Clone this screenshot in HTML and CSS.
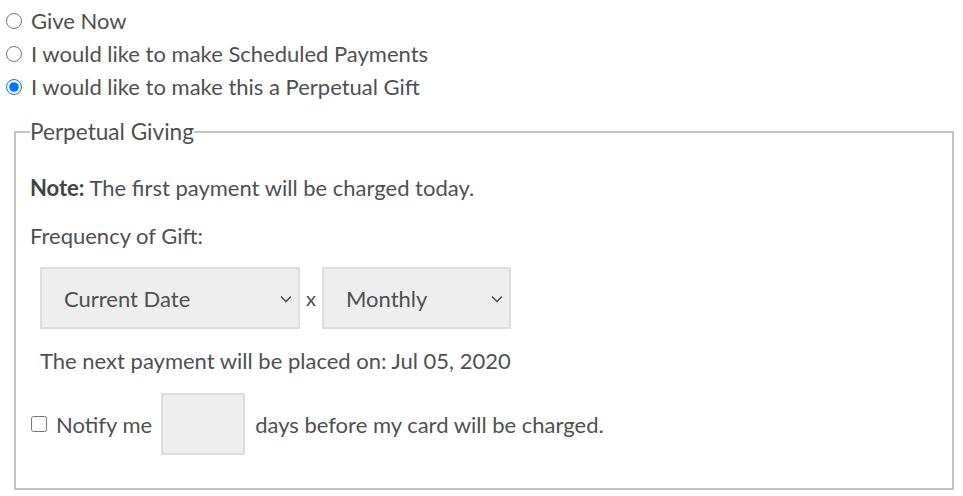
FILE: index.html
```html
<!DOCTYPE html>
<html lang="en">
<head>
    <meta charset="UTF-8">
    <title>Perpetual Gift</title>
    <link rel="stylesheet" href="styles.css">
</head>
<body>
    <div class="options">
        <label class="option"><input type="radio" name="giftType"> Give Now</label>
        <label class="option"><input type="radio" name="giftType"> I would like to make Scheduled Payments</label>
        <label class="option"><input type="radio" name="giftType" checked> I would like to make this a Perpetual Gift</label>
    </div>
    <fieldset class="perpetual">
        <legend>Perpetual Giving</legend>
        <div class="perpetual-body">
            <p><b>Note:</b> The first payment will be charged today.</p>
            <p>Frequency of Gift:</p>
            <div class="freq-row">
                <div class="select-wrap">
                    <select class="sel-date">
                        <option>Current Date</option>
                    </select>
                    <svg class="chev" width="12" height="8" viewBox="0 0 12 8"><path d="M1 1.5 L6 6.5 L11 1.5" fill="none" stroke="#555" stroke-width="1.6"/></svg>
                </div>
                <span class="times">x</span>
                <div class="select-wrap">
                    <select class="sel-freq">
                        <option>Monthly</option>
                    </select>
                    <svg class="chev" width="12" height="8" viewBox="0 0 12 8"><path d="M1 1.5 L6 6.5 L11 1.5" fill="none" stroke="#555" stroke-width="1.6"/></svg>
                </div>
            </div>
            <p class="next-payment">The next payment will be placed on: Jul 05, 2020</p>
            <div class="notify-row">
                <label class="notify"><input type="checkbox"> Notify me</label>
                <input type="text" class="days">
                <span>days before my card will be charged.</span>
            </div>
        </div>
    </fieldset>
</body>
</html>
```

FILE: styles.css
```css
html, body {
    margin: 0;
    background: #fff;
}
body {
    font-family: Lato, "Open Sans", sans-serif;
    font-size: 22px;
    line-height: 33px;
    color: #505050;
    padding-top: 4px;
}
.option {
    display: flex;
    align-items: center;
}
.option input {
    width: 16px;
    height: 16px;
    margin: 0 9px 0 6px;
}
.perpetual {
    margin: 12px 9px 0 14px;
    padding: 23px 14px 33px 14px;
    border: 2px solid #c4c4c4;
}
.perpetual legend {
    padding: 0;
    font-size: 22.6px;
    line-height: 33px;
}
.perpetual-body {
    display: flex;
    flex-direction: column;
    gap: 15px;
}
.perpetual-body p {
    margin: 0;
}
.perpetual-body b {
    color: #444;
}
.freq-row {
    display: flex;
    align-items: center;
    margin-left: 10px;
}
.select-wrap {
    position: relative;
    display: flex;
}
.select-wrap select {
    appearance: none;
    -webkit-appearance: none;
    height: 62px;
    font-family: inherit;
    font-size: 22px;
    color: #505050;
    background-color: #eee;
    border: 2px solid #ddd;
    border-radius: 0;
    padding: 0 30px 0 22px;
}
.chev {
    position: absolute;
    right: 8px;
    top: 28px;
    pointer-events: none;
}
.sel-date { width: 260px; }
.sel-freq { width: 189px; }
.times {
    margin: 0 6px;
    font-size: 20px;
}
.next-payment {
    margin-left: 10px !important;
}
.notify-row {
    display: flex;
    align-items: center;
    padding-top: 1px;
}
.notify {
    display: flex;
    align-items: center;
}
.notify input {
    width: 16px;
    height: 16px;
    margin: 0 9px 0 1px;
}
.days {
    width: 84px;
    height: 62px;
    box-sizing: border-box;
    margin: 0 10px 0 9px;
    background: #eee;
    border: 2px solid #ddd;
    font-family: inherit;
    font-size: 20px;
}
```
